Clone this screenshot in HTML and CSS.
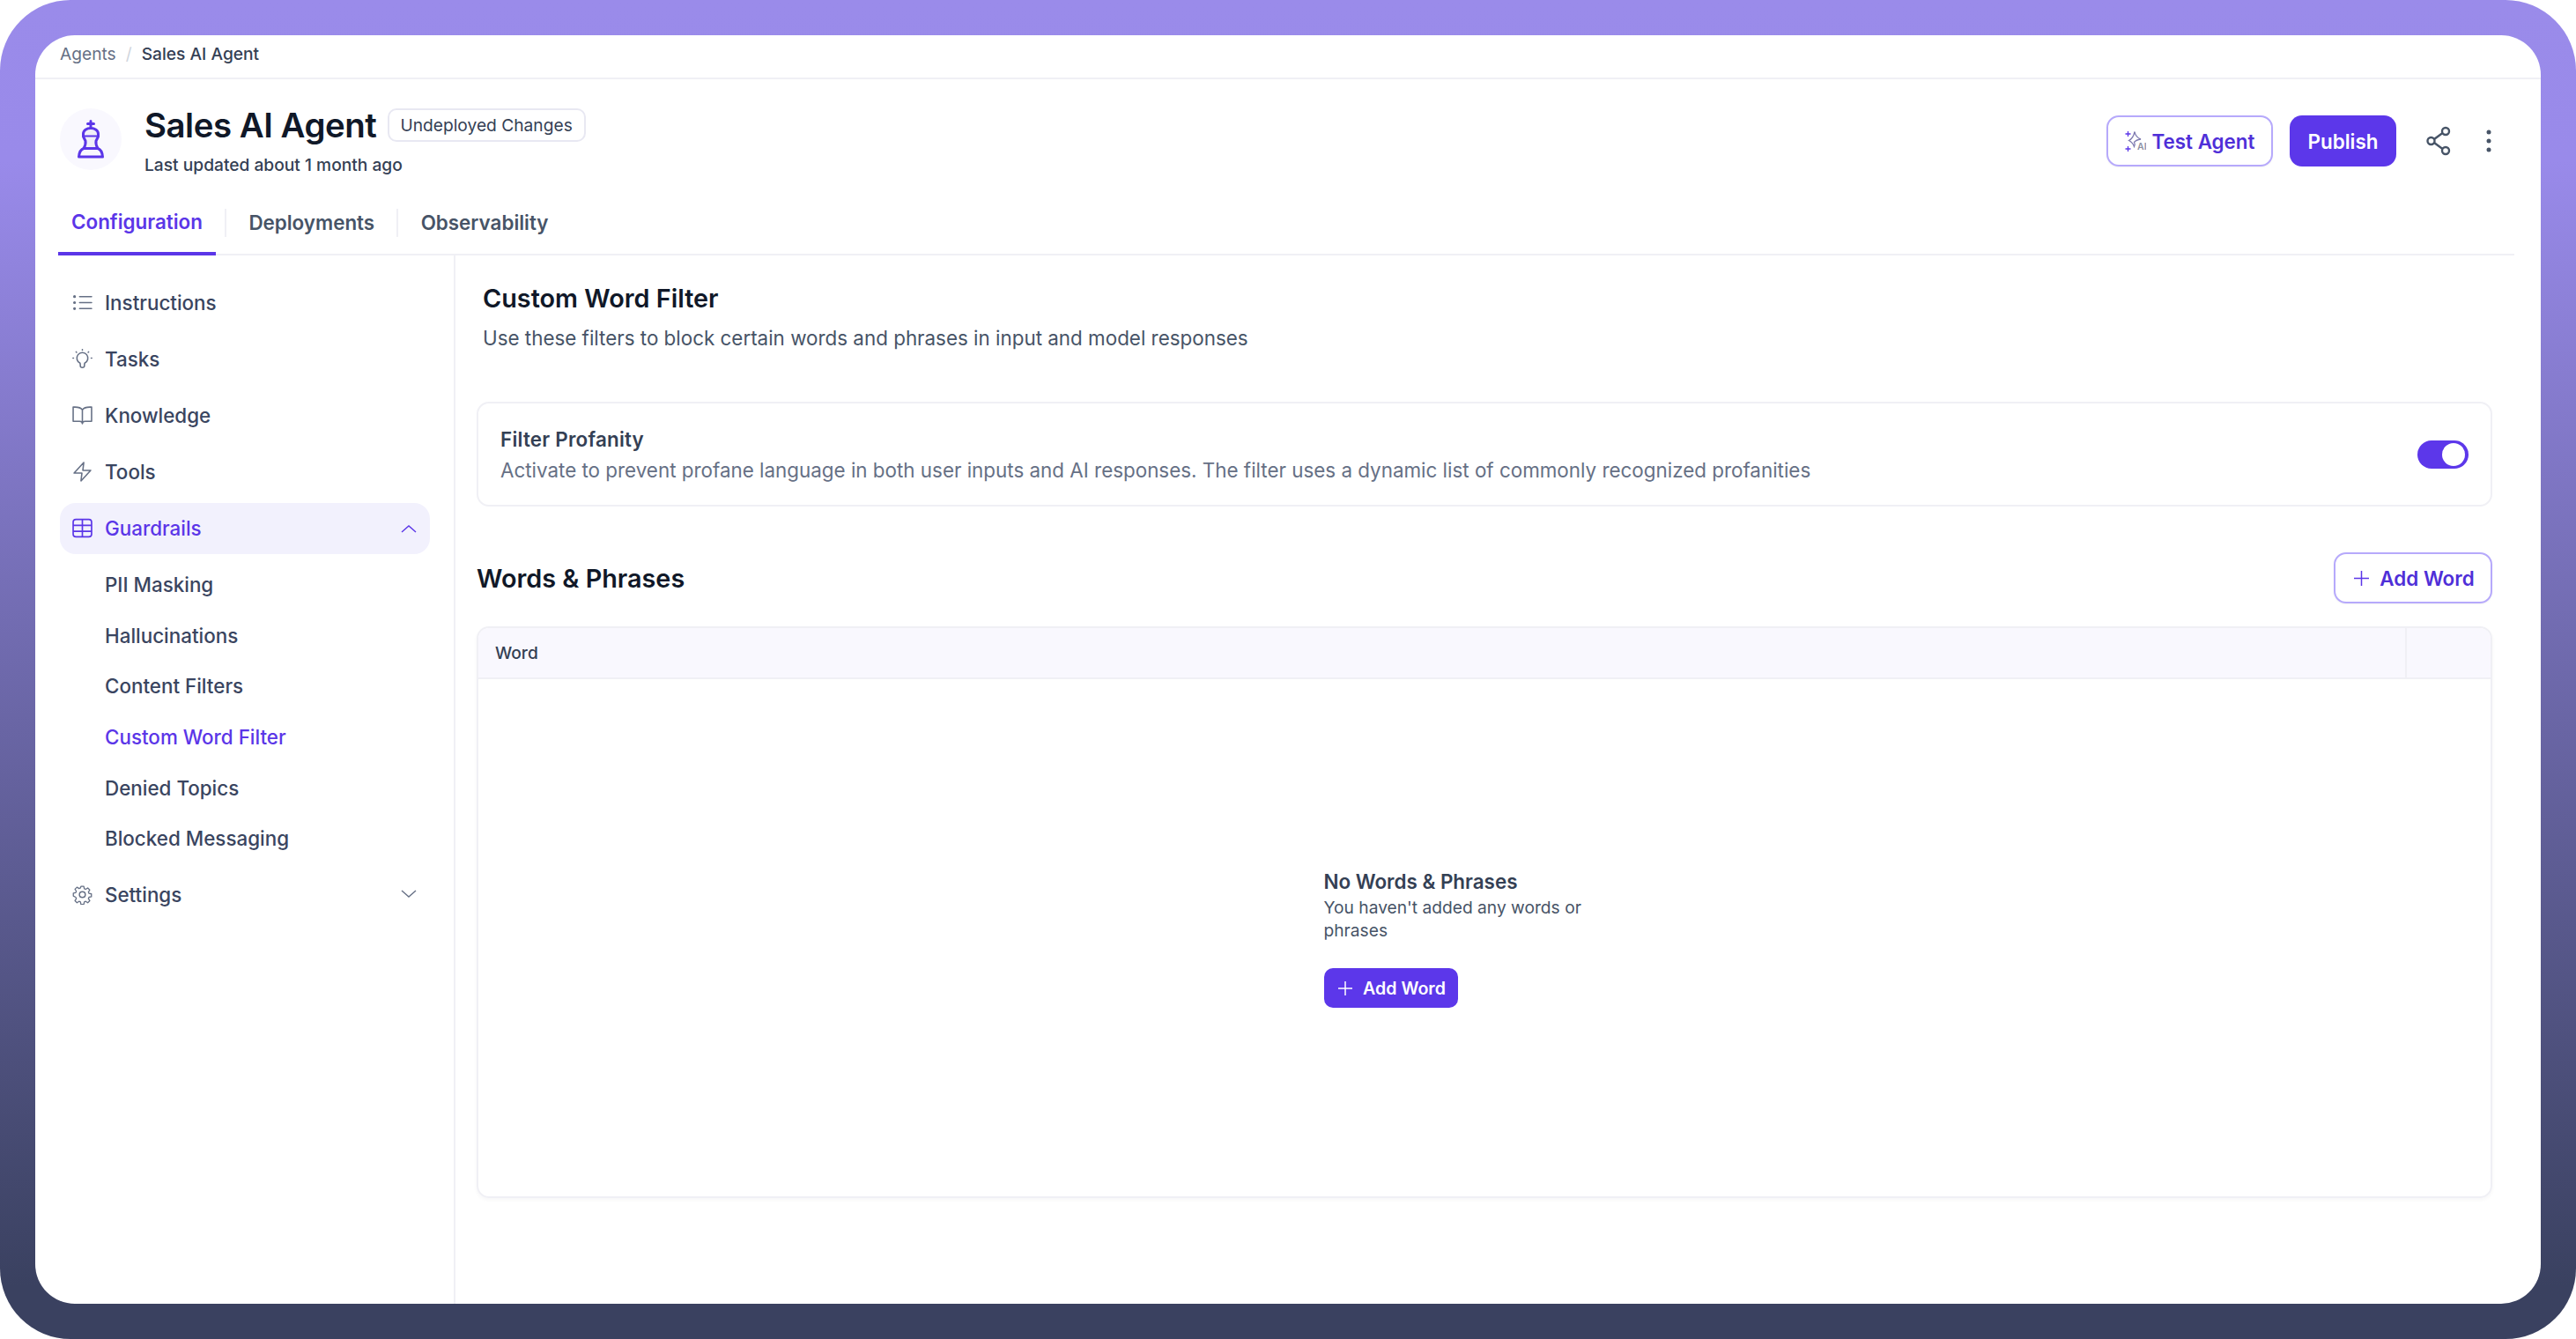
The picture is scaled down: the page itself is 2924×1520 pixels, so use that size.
FILE: index.html
```html
<!DOCTYPE html>
<html lang="en">
  <head>
    <title>Custom Word Filter</title>
    <meta charset="utf-8" />
    <link rel="stylesheet" href="styles.css">
  </head>
  <body>
    <div class="frame">
      <div class="panel">
        <div class="crumbs">
          <span class="crumb">Agents</span>
          <span class="crumb-sep">/</span>
          <span class="crumb-now">Sales AI Agent</span>
        </div>

        <div class="head">
          <div class="avatar">
            <svg width="36" height="44" viewBox="0 0 36 44" fill="none" stroke="#5b36e8" stroke-width="3" stroke-linejoin="round" stroke-linecap="round">
              <path d="M18 1.500v8M14.500 4.500h7"/>
              <path d="M9.500 16c0-4 4-6.500 8.500-6.500s8.500 2.500 8.500 6.500v3l-2.500 5c-.5 3 .5 6 2 8.500H10c1.500-2.500 2.500-5.500 2-8.500l-2.500-5z" fill="#f0eff8"/>
              <path d="M10 32.500h16c3 1 5 3.500 5.500 9.500h-27c.5-6 2.500-8.500 5.500-9.500z"/>
              <path d="M10 18.500h16" stroke-width="2"/>
            </svg>
          </div>
          <div class="head-text">
            <div class="title-row">
              <h1 class="title">Sales AI Agent</h1>
              <span class="badge">Undeployed Changes</span>
            </div>
            <p class="updated">Last updated about 1 month ago</p>
          </div>
          <div class="actions">
            <button class="btn btn-line btn-test">
              <svg width="24" height="24" viewBox="0 0 24 24" fill="none" stroke-width="1.300">
                <path d="M3.500 1v6M.5 4h6M3.500 18v6M.5 21h6" stroke="#5b36e8"/>
                <path d="M11 1.500c.8 4.500 3 7 7 8.500-4 .5-6 1.500-7.500 3.500 1 1.500 1 3 0 5-1-3-3-5.500-6-7 3-1.500 5.500-5 6.500-10z" stroke="#7f7bb0"/>
                <text x="14" y="22" class="ai-mark">AI</text>
              </svg>
              Test Agent
            </button>
            <button class="btn btn-solid">Publish</button>
            <svg class="share" width="28" height="34" viewBox="0 0 28 34" fill="none" stroke="#475467" stroke-width="2.400">
              <circle cx="5.500" cy="17" r="4"/>
              <circle cx="22" cy="6" r="4"/>
              <circle cx="22" cy="28" r="4"/>
              <path d="M9 15l9.500-7M9 19l9.500 7"/>
            </svg>
            <svg class="more" width="6" height="26" viewBox="0 0 6 26" fill="#475467">
              <circle cx="3" cy="3" r="2.500"/>
              <circle cx="3" cy="13" r="2.500"/>
              <circle cx="3" cy="23" r="2.500"/>
            </svg>
          </div>
        </div>

        <div class="tabs">
          <div class="tab tab-on">Configuration</div>
          <div class="tab-sep"></div>
          <div class="tab">Deployments</div>
          <div class="tab-sep"></div>
          <div class="tab">Observability</div>
        </div>

        <div class="body">
          <nav class="side">
            <div class="nav-item">
              <svg class="nav-icon" viewBox="0 0 22 22" fill="none" stroke="#667085" stroke-width="1.500" stroke-linecap="round">
                <path d="M8 4.500h13M8 11h13M8 17.500h13"/>
                <circle cx="2.500" cy="4.500" r=".8"/><circle cx="2.500" cy="11" r=".8"/><circle cx="2.500" cy="17.500" r=".8"/>
              </svg>
              Instructions
            </div>
            <div class="nav-item">
              <svg class="nav-icon" viewBox="0 0 22 22" fill="none" stroke="#667085" stroke-width="1.500" stroke-linecap="round">
                <path d="M8.500 15.500a6 6 0 1 1 5 0c-.3 1-.3 2-.3 3 0 2.500-4.400 2.500-4.400 0 0-1 0-2-.3-3z"/>
                <path d="M11 .8v.6M4.200 3.300l.5.5M17.800 3.300l-.5.5M.8 10h.6M20.600 10h.6" stroke-dasharray="1 1"/>
              </svg>
              Tasks
            </div>
            <div class="nav-item">
              <svg class="nav-icon" viewBox="0 0 22 22" fill="none" stroke="#667085" stroke-width="1.500" stroke-linejoin="round" stroke-linecap="round">
                <path d="M11 5C9.500 2.800 7 2 3 2H1v15.500h7c1.500 0 3 .8 3 2.500 0-1.700 1.500-2.500 3-2.500h7V2h-2c-4 0-6.500.8-8 3zM11 5v15"/>
              </svg>
              Knowledge
            </div>
            <div class="nav-item">
              <svg class="nav-icon" viewBox="0 0 22 22" fill="none" stroke="#667085" stroke-width="1.500" stroke-linejoin="round">
                <path d="M12.500 1 2 12.500h8.500L9.500 21 20 9.500h-8.500z"/>
              </svg>
              Tools
            </div>
            <div class="nav-item nav-on">
              <svg class="nav-icon" viewBox="0 0 22 22" fill="none" stroke="#5b36e8" stroke-width="1.600">
                <rect x="1" y="1.500" width="20" height="19" rx="3"/>
                <path d="M11 1.500v19M1 8h20M1 14.500h20"/>
              </svg>
              <span class="nav-label">Guardrails</span>
              <svg class="chev" viewBox="0 0 18 10" fill="none" stroke="#5b36e8" stroke-width="1.400">
                <path d="M1 9l8-7 8 7"/>
              </svg>
            </div>
            <div class="sub-list">
              <div class="sub-item">PII Masking</div>
              <div class="sub-item">Hallucinations</div>
              <div class="sub-item">Content Filters</div>
              <div class="sub-item sub-on">Custom Word Filter</div>
              <div class="sub-item">Denied Topics</div>
              <div class="sub-item">Blocked Messaging</div>
            </div>
            <div class="nav-item">
              <svg class="nav-icon" viewBox="0 0 22 22" fill="none" stroke="#667085" stroke-width="1.400" stroke-linejoin="round">
                <circle cx="11" cy="11" r="3.200"/>
                <path d="M9.300 1h3.400l.6 2.900 1.700.7 2.500-1.600 2.400 2.400-1.600 2.500.7 1.700 2.900.6v3.400l-2.900.6-.7 1.700 1.600 2.500-2.400 2.400-2.500-1.600-1.700.7-.6 2.900H9.300l-.6-2.900-1.700-.7-2.500 1.600-2.400-2.400 1.600-2.500-.7-1.700L.1 12.700V9.300l2.900-.6.700-1.700L2.100 4.500l2.400-2.400L7 3.700l1.700-.7z" transform="translate(1.100 1.100) scale(.9)"/>
              </svg>
              <span class="nav-label">Settings</span>
              <svg class="chev" viewBox="0 0 18 10" fill="none" stroke="#667085" stroke-width="1.400">
                <path d="M1 1l8 7 8-7"/>
              </svg>
            </div>
          </nav>

          <main class="main">
            <div class="intro">
              <h2 class="main-title">Custom Word Filter</h2>
              <p class="main-sub">Use these filters to block certain words and phrases in input and model responses</p>
            </div>

            <div class="card">
              <div class="card-text">
                <div class="card-title">Filter Profanity</div>
                <div class="card-desc">Activate to prevent profane language in both user inputs and AI responses. The filter uses a dynamic list of commonly recognized profanities</div>
              </div>
              <div class="toggle"><div class="knob"></div></div>
            </div>

            <div class="words-row">
              <h3 class="words-title">Words &amp; Phrases</h3>
              <button class="btn btn-line btn-add">
                <svg width="17" height="17" viewBox="0 0 17 17" stroke="#5b36e8" stroke-width="1.500"><path d="M8.500 0v17M0 8.500h17"/></svg>
                Add Word
              </button>
            </div>

            <div class="table">
              <div class="table-head">
                <div class="col-word">Word</div>
                <div class="col-rest"></div>
              </div>
              <div class="table-empty">
                <div class="empty">
                  <div class="empty-title">No Words &amp; Phrases</div>
                  <p class="empty-text">You haven't added any words or phrases</p>
                  <button class="btn-small">
                    <svg width="16" height="16" viewBox="0 0 16 16" stroke="#fff" stroke-width="1.500"><path d="M8 0v16M0 8h16"/></svg>
                    Add Word
                  </button>
                </div>
              </div>
            </div>
          </main>
        </div>
      </div>
    </div>
  </body>
</html>
```

FILE: styles.css
```css
* {
  box-sizing: border-box;
}
html, body {
  margin: 0;
  height: 100%;
  background: #fff;
}
body {
  font-family: Inter, "Noto Sans", sans-serif;
  color: #344054;
}
h1, h2, h3, p {
  margin: 0;
}
button {
  font-family: inherit;
  cursor: pointer;
}
.frame {
  height: 1520px;
  padding: 40px;
  border-radius: 80px;
  background: linear-gradient(180deg, #9a8bea 0%, #998aea 12%, #3a4160 96%);
}
.panel {
  height: 100%;
  display: flex;
  flex-direction: column;
  background: #fff;
  border-radius: 45px;
  overflow: hidden;
}

/* breadcrumb */
.crumbs {
  height: 50px;
  flex: none;
  display: flex;
  align-items: center;
  padding: 0 28px 6px;
  border-bottom: 2px solid #f0f0f5;
  font-size: 19.200px;
}
.crumb {
  color: #667085;
}
.crumb-sep {
  margin: 0 11px;
  color: #d0d5dd;
}
.crumb-now {
  color: #344054;
  font-weight: 500;
}

/* agent header */
.head {
  height: 127px;
  flex: none;
  display: flex;
  padding: 33px 0 0 28px;
}
.avatar {
  width: 70px;
  height: 70px;
  flex: none;
  display: flex;
  align-items: center;
  justify-content: center;
  border-radius: 50%;
  background: #f9f8fe;
}
.head-text {
  margin-left: 26px;
}
.title-row {
  display: flex;
  align-items: center;
  height: 38px;
}
.title {
  font-size: 38.400px;
  font-weight: 600;
  letter-spacing: -0.012em;
  color: #101828;
}
.badge {
  height: 38px;
  margin-left: 13px;
  padding: 0 13px 0 12px;
  display: flex;
  align-items: center;
  border: 2px solid #e8e8f2;
  border-radius: 10px;
  font-size: 19.200px;
  color: #344054;
}
.updated {
  margin-top: 13px;
  font-size: 19.200px;
  font-weight: 500;
  line-height: 26px;
  color: #344054;
}
.actions {
  display: flex;
  align-items: center;
  height: 58px;
  margin: 8px 0 0 auto;
  padding-right: 56px;
}
.btn {
  height: 58px;
  display: flex;
  align-items: center;
  justify-content: center;
  border-radius: 14px;
  font-size: 22.400px;
  font-weight: 600;
}
.btn-line {
  border: 2px solid #b6a9fb;
  background: #fff;
  color: #4f2fd8;
  box-shadow: 0 1px 2px #1018280d;
}
.btn-test {
  width: 189px;
  gap: 7px;
}
.btn-solid {
  width: 121px;
  margin-left: 19px;
  border: 0;
  background: #5c37ea;
  color: #fff;
}
.ai-mark {
  font-size: 10.500px;
  font-weight: 600;
  fill: #8d90a4;
  stroke: none;
}
.share {
  margin-left: 34px;
}
.more {
  margin-left: 40px;
}

/* tabs */
.tabs {
  height: 73px;
  flex: none;
  display: flex;
  align-items: center;
  margin: 0 30px 0 26px;
  border-bottom: 2px solid #f0f0f5;
}
.tab {
  height: 100%;
  display: flex;
  align-items: center;
  padding: 0 15px;
  font-size: 22.400px;
  font-weight: 600;
  color: #475467;
}
.tab-on {
  margin-bottom: -2px;
  height: 73px;
  border-bottom: 4px solid #5b36e8;
  color: #5b36e8;
}
.tab-sep {
  width: 2px;
  height: 32px;
  margin: 0 10.500px 0 10px;
  background: #f0f0f5;
}

/* side nav */
.body {
  flex: 1;
  display: flex;
  min-height: 0;
}
.side {
  width: 477px;
  flex: none;
  display: flex;
  flex-direction: column;
  gap: 6px;
  padding: 25px 27px 0 28px;
  border-right: 2px solid #f0f0f5;
}
.nav-item {
  height: 58px;
  flex: none;
  display: flex;
  align-items: center;
  padding: 0 15px 1px 14px;
  border-radius: 18px;
  font-size: 22.400px;
  font-weight: 500;
  color: #3a4560;
}
.nav-icon {
  width: 23px;
  height: 23px;
  margin-right: 14px;
  flex: none;
}
.nav-label {
  flex: 1;
}
.nav-on {
  background: #f2f1fd;
  color: #5b36e8;
}
.chev {
  width: 18px;
  height: 10px;
}
.sub-item {
  height: 57.600px;
  display: flex;
  align-items: center;
  padding-left: 51px;
  font-size: 22.400px;
  font-weight: 500;
  color: #3a4560;
}
.sub-item.sub-on {
  color: #5b36e8;
}

/* main column */
.main {
  flex: 1;
  min-width: 0;
  padding: 29px 55px 0 24px;
}
.intro {
  padding-left: 7px;
}
.main-title {
  font-size: 28.800px;
  line-height: 40px;
  font-weight: 600;
  color: #101828;
}
.main-sub {
  margin-top: 8px;
  font-size: 22.400px;
  line-height: 34px;
  color: #475467;
}
.card {
  height: 119px;
  margin-top: 55px;
  padding: 0 27px 0 25px;
  display: flex;
  align-items: center;
  justify-content: space-between;
  border: 2px solid #f0f0f5;
  border-radius: 14px;
}
.card-text {
  padding-top: 1px;
}
.card-title {
  font-size: 22.400px;
  line-height: 34px;
  font-weight: 600;
  letter-spacing: 0.01em;
  color: #344054;
}
.card-desc {
  margin-top: 1px;
  font-size: 22.400px;
  line-height: 34px;
  color: #667085;
}
.toggle {
  width: 58px;
  height: 32px;
  margin-right: -2px;
  padding: 3px 4px;
  display: flex;
  justify-content: flex-end;
  border-radius: 16px;
  background: #5c37ea;
}
.knob {
  width: 26px;
  height: 26px;
  border-radius: 50%;
  background: #fff;
}
.words-row {
  display: flex;
  align-items: center;
  justify-content: space-between;
  margin-top: 52px;
}
.words-title {
  font-size: 28.800px;
  font-weight: 600;
  color: #101828;
}
.btn-add {
  width: 180px;
  gap: 12px;
  padding-left: 9px;
}
.table {
  height: 649px;
  margin-top: 26px;
  display: flex;
  flex-direction: column;
  border: 2px solid #f0f0f5;
  border-radius: 14px;
  box-shadow: 0 2px 4px #1018280a;
  overflow: hidden;
}
.table-head {
  height: 58px;
  flex: none;
  display: flex;
  background: #f9f8fe;
  border-bottom: 2px solid #f0f0f5;
}
.col-word {
  flex: 1;
  display: flex;
  align-items: center;
  padding-left: 19px;
  font-size: 19.200px;
  font-weight: 500;
  color: #344054;
}
.col-rest {
  width: 97px;
  border-left: 2px solid #f0f0f5;
}
.table-empty {
  flex: 1;
  display: flex;
  align-items: center;
  justify-content: center;
}
.empty {
  width: 365px;
}
.empty-title {
  font-size: 22.400px;
  line-height: 32px;
  font-weight: 600;
  color: #344054;
}
.empty-text {
  width: 300px;
  font-size: 19.200px;
  line-height: 26.400px;
  color: #475467;
}
.btn-small {
  height: 45px;
  width: 152px;
  margin-top: 30px;
  padding-left: 9px;
  display: flex;
  align-items: center;
  justify-content: center;
  gap: 12px;
  border: 0;
  border-radius: 10px;
  background: #5c37ea;
  color: #fff;
  font-size: 19.600px;
  font-weight: 600;
}
```
